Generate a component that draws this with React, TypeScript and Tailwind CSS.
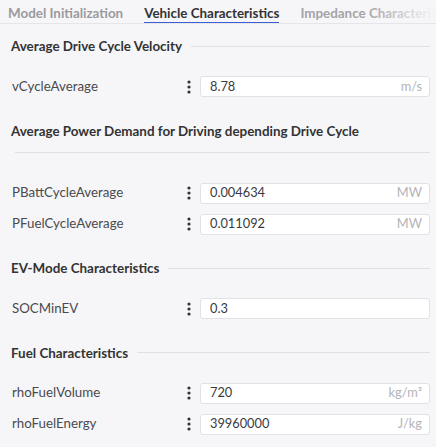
import React from 'react';

type Field = { name: string; value: string; unit?: string };
type Section = { title: string; wrap?: boolean; fields: Field[] };

const sections: Section[] = [
  { title: 'Average Drive Cycle Velocity', fields: [{ name: 'vCycleAverage', value: '8.78', unit: 'm/s' }] },
  {
    title: 'Average Power Demand for Driving depending Drive Cycle',
    wrap: true,
    fields: [
      { name: 'PBattCycleAverage', value: '0.004634', unit: 'MW' },
      { name: 'PFuelCycleAverage', value: '0.011092', unit: 'MW' },
    ],
  },
  { title: 'EV-Mode Characteristics', fields: [{ name: 'SOCMinEV', value: '0.3' }] },
  {
    title: 'Fuel Characteristics',
    fields: [
      { name: 'rhoFuelVolume', value: '720', unit: 'kg/m³' },
      { name: 'rhoFuelEnergy', value: '39960000', unit: 'J/kg' },
    ],
  },
];

function Dots() {
  return (
    <svg width="4" height="14" viewBox="0 0 4 14" className="text-[#333]">
      <circle cx="2" cy="2" r="1.6" fill="currentColor" />
      <circle cx="2" cy="7" r="1.6" fill="currentColor" />
      <circle cx="2" cy="12" r="1.6" fill="currentColor" />
    </svg>
  );
}

export default function App() {
  return (
    <div className="w-[436px] h-[447px] overflow-hidden bg-[#f6f6f8] font-['Lato','Liberation_Sans',sans-serif]">
      <div className="relative h-[24px] border-b border-[#e6e6ea] flex gap-[21px] pl-[8px] overflow-hidden whitespace-nowrap text-[13.4px] font-bold">
        <div className="pt-[3px] text-[#9a9a9e]">Model Initialization</div>
        <div className="pt-[3px] text-[#333] border-b-[2px] border-[#3d5fd4] h-[24px]">Vehicle Characteristics</div>
        <div className="pt-[3px] text-[#a4a4a8]">Impedance Characteristics</div>
        <div className="absolute right-0 top-0 h-full w-[70px] bg-gradient-to-r from-transparent to-[#f6f6f8]"></div>
      </div>

      {sections.map((s, i) => (
        <div key={s.title} className={i === 0 ? 'mt-[11px]' : 'mt-[17.5px]'}>
          <div className="flex flex-wrap items-center pl-[11px] pr-[6px]">
            <div className="h-[22px] leading-[22px] text-[13.4px] font-bold text-[#333] whitespace-nowrap pr-[9px]">
              {s.title}
            </div>
            <div className={`h-[22px] flex items-center ${s.wrap ? 'basis-full pl-[4px]' : 'flex-1'}`}>
              <div className="w-full h-px bg-[#e0e0e4]"></div>
            </div>
          </div>
          <div className="mt-[14px]">
            {s.fields.map((f) => (
              <div key={f.name} className="h-[31px] flex items-center pl-[12px] pr-[6px]">
                <div className="flex-1 text-[13.3px] text-[#4a4a4e]">{f.name}</div>
                <div className="w-[13px] flex justify-start">
                  <Dots />
                </div>
                <div className="w-[230px] h-[21px] bg-white border border-[#e2e2e6] rounded-[3px] flex items-center justify-between pl-[9px] pr-[7px] text-[12.8px]">
                  <span className="text-[#3a3a3e]">{f.value}</span>
                  {f.unit && <span className="text-[#b4b4b8]">{f.unit}</span>}
                </div>
              </div>
            ))}
          </div>
        </div>
      ))}
    </div>
  );
}
